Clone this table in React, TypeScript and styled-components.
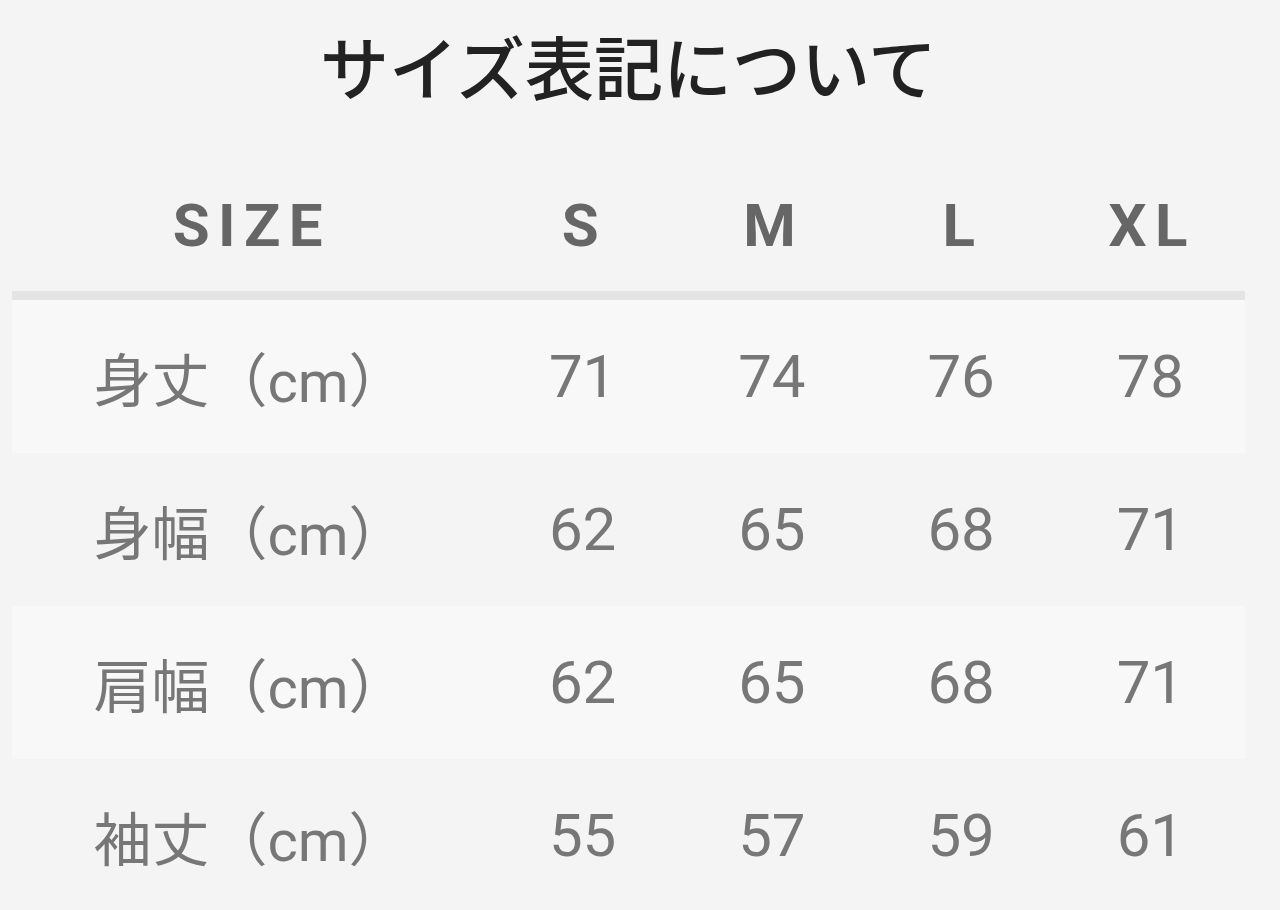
import React from "react";
import styled, { createGlobalStyle } from "styled-components";

const GlobalStyle = createGlobalStyle`
  html, body {
    margin: 0;
    padding: 0;
    background: #f4f4f4;
  }
  body {
    font-family: Roboto, "Noto Sans CJK JP", sans-serif;
  }
`;

const Page = styled.div`
  width: 1233px;
  margin-left: 12px;
  display: flex;
  flex-direction: column;
`;

const Title = styled.h1`
  margin: 0;
  height: 140px;
  box-sizing: border-box;
  padding-bottom: 10px;
  display: flex;
  align-items: center;
  justify-content: center;
  font-family: "Noto Sans CJK JP", sans-serif;
  font-size: 69px;
  font-weight: 500;
  color: #222222;
  letter-spacing: 0;
`;

const Table = styled.div`
  display: flex;
  flex-direction: column;
`;

const Row = styled.div<{ $striped?: boolean; $header?: boolean }>`
  display: grid;
  grid-template-columns: 476px repeat(4, 1fr);
  height: ${(p) => (p.$header ? "151px" : "153px")};
  background: ${(p) => (p.$striped ? "#f8f8f8" : "transparent")};
  border-bottom: ${(p) => (p.$header ? "9px solid #e4e4e4" : "none")};
`;

const HeadCell = styled.div`
  display: flex;
  align-items: center;
  justify-content: center;
  font-family: Roboto, sans-serif;
  font-weight: 700;
  font-size: 60px;
  letter-spacing: 0.14em;
  text-indent: 0.06em;
  color: #666666;
  padding-top: 20px;
`;

const Cell = styled.div<{ $label?: boolean }>`
  display: flex;
  align-items: center;
  justify-content: center;
  font-family: Roboto, "Noto Sans CJK JP", sans-serif;
  font-weight: 400;
  font-size: ${(p) => (p.$label ? "58px" : "60px")};
  color: #777777;
  white-space: nowrap;
`;

const headers = ["SIZE", "S", "M", "L", "XL"];

const rows: { label: string; values: number[] }[] = [
  { label: "身丈（cm）", values: [71, 74, 76, 78] },
  { label: "身幅（cm）", values: [62, 65, 68, 71] },
  { label: "肩幅（cm）", values: [62, 65, 68, 71] },
  { label: "袖丈（cm）", values: [55, 57, 59, 61] },
];

export default function App() {
  return (
    <>
      <GlobalStyle />
      <Page>
        <Title>サイズ表記について</Title>
        <Table>
          <Row $header>
            {headers.map((h) => (
              <HeadCell key={h}>{h}</HeadCell>
            ))}
          </Row>
          {rows.map((r, i) => (
            <Row key={r.label} $striped={i % 2 === 0}>
              <Cell $label>{r.label}</Cell>
              {r.values.map((v, j) => (
                <Cell key={j}>{v}</Cell>
              ))}
            </Row>
          ))}
        </Table>
      </Page>
    </>
  );
}
